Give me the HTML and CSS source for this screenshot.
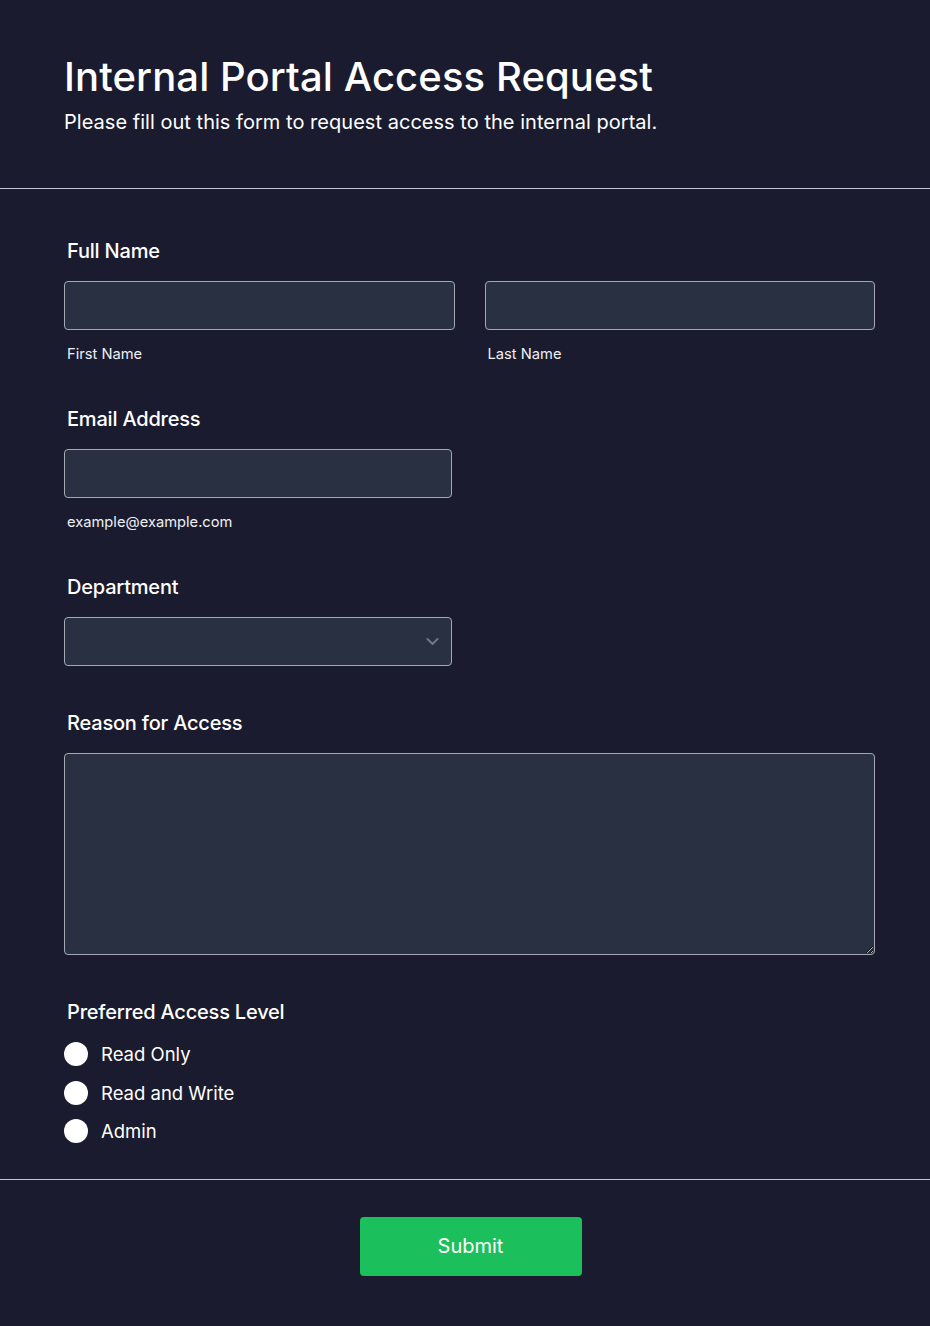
FILE: index.html
```html
<!DOCTYPE html>
<html lang="en">
<head>
<meta charset="utf-8">
<title>Internal Portal Access Request</title>
<link rel="stylesheet" href="styles.css">
</head>
<body>
<div class="page">
  <header class="header">
    <h1 class="title">Internal Portal Access Request</h1>
    <p class="subtitle">Please fill out this form to request access to the internal portal.</p>
  </header>
  <form class="form">
    <div class="field">
      <label class="label">Full Name</label>
      <div class="row">
        <div class="col">
          <input class="input" type="text">
          <span class="sublabel">First Name</span>
        </div>
        <div class="col">
          <input class="input" type="text">
          <span class="sublabel">Last Name</span>
        </div>
      </div>
    </div>
    <div class="field">
      <label class="label">Email Address</label>
      <div class="col narrow">
        <input class="input" type="email">
        <span class="sublabel">example@example.com</span>
      </div>
    </div>
    <div class="field plain">
      <label class="label">Department</label>
      <div class="select-wrap narrow">
        <select class="input select"><option></option></select>
        <svg class="chevron" viewBox="0 0 13 7" width="13" height="7"><path d="M1.5 1 L6.5 6 L11.5 1" fill="none" stroke="#6f7686" stroke-width="2" stroke-linecap="round" stroke-linejoin="round"/></svg>
      </div>
    </div>
    <div class="field plain">
      <label class="label">Reason for Access</label>
      <textarea class="input textarea"></textarea>
    </div>
    <div class="field last">
      <label class="label">Preferred Access Level</label>
      <div class="radios">
        <label class="radio"><span class="dot"></span><span>Read Only</span></label>
        <label class="radio"><span class="dot"></span><span>Read and Write</span></label>
        <label class="radio"><span class="dot"></span><span>Admin</span></label>
      </div>
    </div>
  </form>
  <footer class="footer">
    <button class="submit" type="button">Submit</button>
  </footer>
</div>
</body>
</html>
```
FILE: styles.css
```css
* { box-sizing: border-box; }
html, body { margin: 0; padding: 0; }
body {
  background: #1a1b2e;
  color: #ffffff;
  font-family: Inter, "Noto Sans", sans-serif;
  min-height: 1326px;
}
.page { width: 930px; }
.header {
  padding: 53px 55px 0 64px;
  height: 189px;
  border-bottom: 1px solid #c4c7d0;
}
.title {
  margin: 0;
  font-size: 40px;
  line-height: 48px;
  font-weight: 500;
  letter-spacing: 0.1px;
}
.subtitle {
  margin: 7px 0 0;
  font-size: 20px;
  line-height: 28px;
  font-weight: 400;
  letter-spacing: 0.03px;
}
.form {
  padding: 48px 55px 28px 64px;
  border-bottom: 1px solid #c4c7d0;
}
.field { margin-bottom: 41px; }
.field.plain { margin-bottom: 43px; }
.field.last { margin-bottom: 0; }
.label {
  display: block;
  font-size: 20px;
  line-height: 28px;
  font-weight: 500;
  letter-spacing: -0.2px;
  padding-left: 3px;
  margin-bottom: 16px;
}
.row { display: flex; gap: 30px; }
.col { display: flex; flex-direction: column; flex: 1; }
.narrow { width: 388px; }
.input {
  display: block;
  width: 100%;
  height: 49px;
  background: #283042;
  border: 1px solid #a3a8b4;
  border-radius: 4px;
  color: #fff;
  font-family: inherit;
  font-size: 16px;
  padding: 0 12px;
  outline: none;
}
.sublabel {
  display: block;
  margin-top: 14px;
  padding-left: 3px;
  font-size: 14.7px;
  line-height: 20px;
  color: #eef0f4;
}
.select-wrap { position: relative; }
.select { appearance: none; -webkit-appearance: none; }
.chevron {
  position: absolute;
  right: 13px;
  top: 21px;
}
.textarea {
  height: 202px;
  resize: vertical;
  padding: 10px 12px;
  color-scheme: dark;
}
.radios { display: flex; flex-direction: column; margin-top: -7px; }
.radio {
  display: flex;
  align-items: center;
  gap: 13px;
  height: 38.5px;
  font-size: 18.5px;
  font-weight: 400;
}
.dot {
  width: 24px;
  height: 24px;
  border-radius: 50%;
  background: #ffffff;
  flex: none;
}
.footer {
  display: flex;
  justify-content: center;
  padding: 37px 53px 50px 64px;
}
.submit {
  width: 222px;
  height: 59px;
  background: #1bbf5b;
  border: none;
  border-radius: 4px;
  color: #ffffff;
  font-family: inherit;
  font-size: 20px;
  font-weight: 400;
  cursor: pointer;
}
```
